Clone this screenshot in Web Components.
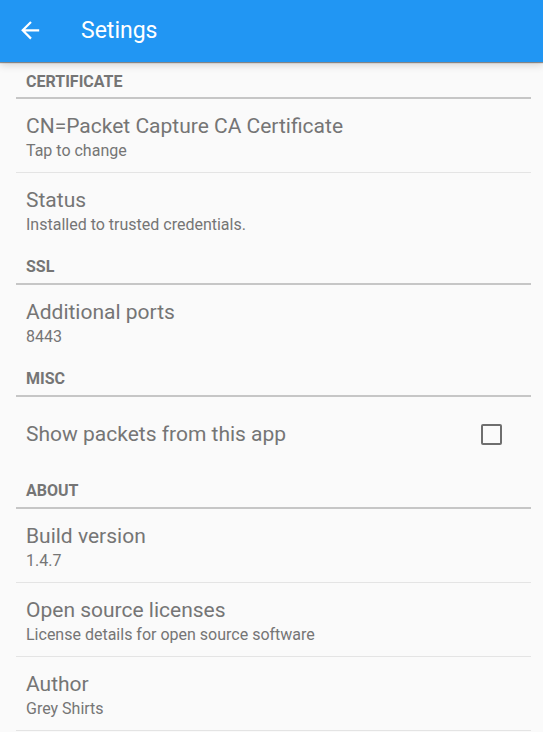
<!DOCTYPE html>
<html lang="en">
<head>
<meta charset="utf-8">
<meta name="viewport" content="width=device-width, initial-scale=1">
<title>Setings</title>
<style>
  body { margin: 0; background: #fafafa; color: #757575; font-family: Roboto, "Liberation Sans", sans-serif; }
</style>
</head>
<body>
<settings-page>
  <app-bar slot="bar">Setings</app-bar>
  <pref-group heading="CERTIFICATE">
    <pref-row><span slot="title">CN=Packet Capture CA Certificate</span><span slot="summary">Tap to change</span></pref-row>
    <pref-row><span slot="title">Status</span><span slot="summary">Installed to trusted credentials.</span></pref-row>
  </pref-group>
  <pref-group heading="SSL">
    <pref-row><span slot="title">Additional ports</span><span slot="summary">8443</span></pref-row>
  </pref-group>
  <pref-group heading="MISC">
    <pref-check>Show packets from this app</pref-check>
  </pref-group>
  <pref-group heading="ABOUT">
    <pref-row><span slot="title">Build version</span><span slot="summary">1.4.7</span></pref-row>
    <pref-row><span slot="title">Open source licenses</span><span slot="summary">License details for open source software</span></pref-row>
    <pref-row class="ruled"><span slot="title">Author</span><span slot="summary">Grey Shirts</span></pref-row>
  </pref-group>
</settings-page>
<script>
const define = (name, html, setup) => {
  const template = document.createElement('template');
  template.innerHTML = html;
  customElements.define(name, class extends HTMLElement {
    constructor() {
      super();
      this.attachShadow({ mode: 'open' }).append(template.content.cloneNode(true));
    }
    connectedCallback() { if (setup) setup(this, this.shadowRoot); }
  });
};

define('settings-page', `
  <style>
    :host { display: block; }
    main { display: flex; flex-direction: column; padding: 0 12px 0 16px; }
  </style>
  <slot name="bar"></slot>
  <main><slot></slot></main>`);

define('app-bar', `
  <style>
    :host { display: block; position: relative; background: #2196f3; color: #fff;
      box-shadow: 0 1px 1px rgba(0,0,0,.4), 0 3px 8px rgba(0,0,0,.16); }
    header { display: flex; align-items: center; gap: 36px; padding: 16px 17px; }
    button { display: flex; padding: 0; border: 0; background: none; color: inherit; cursor: pointer; }
    h1 { margin: 0; font-size: 23px; line-height: 30px; font-weight: 400; }
  </style>
  <header>
    <button type="button" aria-label="Back">
      <svg width="28" height="28" viewBox="0 0 28 28" fill="none" stroke="currentColor" stroke-width="2.200">
        <path d="M22.200 13.300H5.800M14 5L5.700 13.300L14 21.600"/>
      </svg>
    </button>
    <h1><slot></slot></h1>
  </header>`);

define('pref-group', `
  <style>
    :host { display: block; }
    h2 { margin: 0; padding: 10px 10px 6px; border-bottom: 2px solid #c6c6c6;
      font-size: 16px; line-height: 19px; font-weight: 700; }
    :host(:not(:first-of-type)) h2 { padding-bottom: 7px; }
  </style>
  <section><h2></h2><slot></slot></section>`,
  (host, root) => { root.querySelector('h2').textContent = host.getAttribute('heading'); });

define('pref-row', `
  <style>
    :host { display: block; border-bottom: 1px solid #e4e4e4; }
    :host(:last-child:not(.ruled)) { border-bottom-color: transparent; }
    button { display: flex; flex-direction: column; width: 100%; padding: 13px 10px 10px; border: 0;
      background: none; color: inherit; font: inherit; text-align: left; cursor: pointer; }
    .title { font-size: 21px; line-height: 28px; }
    .summary { font-size: 16px; line-height: 22px; }
  </style>
  <button type="button">
    <span class="title"><slot name="title"></slot></span>
    <span class="summary"><slot name="summary"></slot></span>
  </button>`);

define('pref-check', `
  <style>
    :host { display: block; }
    label { display: flex; align-items: center; justify-content: space-between; padding: 23px 29px 23px 10px;
      font-size: 21px; line-height: 28px; cursor: pointer; }
    input { appearance: none; box-sizing: border-box; width: 21px; height: 21px; margin: 0;
      border: 2px solid #6e6e6e; border-radius: 2px; }
    input:checked { background: #757575; box-shadow: inset 0 0 0 3px #fafafa; }
  </style>
  <label><span><slot></slot></span><input type="checkbox" aria-label="Show packets from this app"></label>`);
</script>
</body>
</html>
